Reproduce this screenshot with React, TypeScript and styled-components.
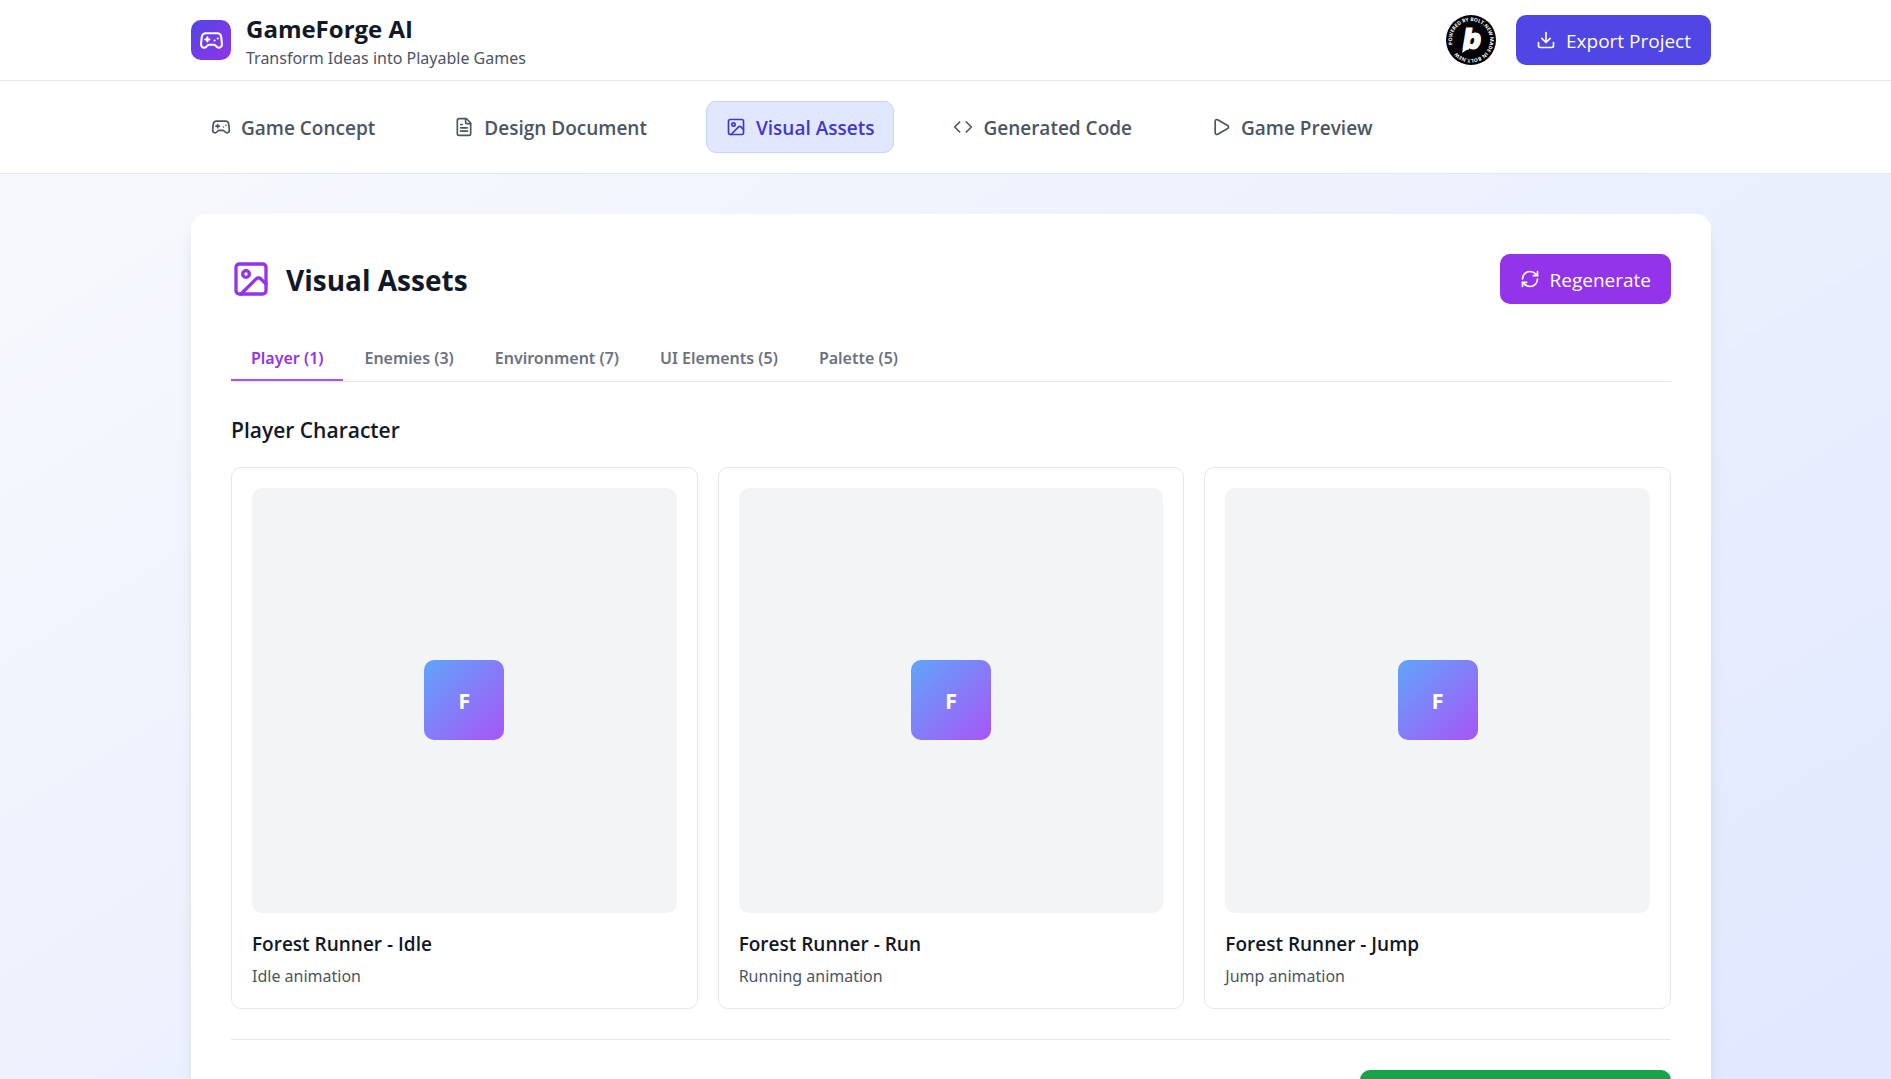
import React, { useState } from "react";
import styled, { createGlobalStyle } from "styled-components";
import { Code, Download, FileText, Gamepad2, Image as ImageIcon, Play, RefreshCw } from "lucide-react";

const GlobalStyle = createGlobalStyle`
  *, *::before, *::after { box-sizing: border-box; }
  body {
    margin: 0;
    font-family: "Open Sans", "Noto Sans", sans-serif;
    color: #111827;
  }
  h1, h2, h3, h4, p { margin: 0; }
  button { font: inherit; cursor: pointer; border: 0; background: none; }
  svg { display: block; flex: none; }
`;

const Viewport = styled.div`
  height: 100vh;
  overflow: hidden;
`;

const Page = styled.div`
  min-height: 100%;
  background: linear-gradient(to bottom right, #f8fafc, #e0e7ff);
`;

const Bar = styled.div`
  padding-left: 11px;
  background: #fff;
  border-bottom: 1px solid #e5e7eb;
`;

const Container = styled.div`
  max-width: 1520px;
  margin: 0 auto;
`;

const HeaderRow = styled(Container)`
  display: flex;
  align-items: center;
  justify-content: space-between;
  height: 80px;
`;

const Brand = styled.div`
  display: flex;
  align-items: center;
  gap: 15px;
`;

const BrandTile = styled.div`
  display: flex;
  align-items: center;
  justify-content: center;
  width: 40px;
  height: 40px;
  border-radius: 10px;
  color: #fff;
  background: linear-gradient(to bottom right, #4f46e5, #9333ea);
`;

const BrandText = styled.div`
  padding-top: 2px;
`;

const BrandName = styled.h1`
  font-size: 24px;
  line-height: 35px;
  font-weight: 700;
`;

const Note = styled.p`
  font-family: "Noto Sans", "Open Sans", sans-serif;
  font-size: 16px;
  line-height: 25px;
  color: #4b5563;
`;

const HeaderActions = styled.div`
  display: flex;
  align-items: center;
  gap: 20px;
`;

const BadgeLink = styled.a`
  display: block;
  width: 50px;
  height: 50px;
`;

const ActionButton = styled.button<{ $color: string; $minWidth?: number }>`
  display: flex;
  align-items: center;
  justify-content: center;
  gap: 10px;
  height: 50px;
  min-width: ${(p) => (p.$minWidth ? `${p.$minWidth}px` : "0")};
  padding: 0 20px;
  border-radius: 10px;
  font-size: 19px;
  line-height: 30px;
  color: #fff;
  background: ${(p) => p.$color};
`;

const ButtonLabel = styled.span`
  padding-top: 2px;
`;

const StepNav = styled.nav`
  display: flex;
  gap: 39px;
  max-width: 1520px;
  margin: 0 auto;
  padding: 20px 0;
`;

const StepButton = styled.button<{ $active: boolean }>`
  display: flex;
  align-items: center;
  gap: 10px;
  height: 52px;
  padding: 0 19px;
  border: 1px solid ${(p) => (p.$active ? "#c7d2fe" : "transparent")};
  border-radius: 10px;
  font-size: 19px;
  line-height: 30px;
  font-weight: 600;
  color: ${(p) => (p.$active ? "#4338ca" : "#4b5563")};
  background: ${(p) => (p.$active ? "#e0e7ff" : "transparent")};
`;

const Main = styled.main`
  padding: 40px 0 40px 11px;
`;

const Panel = styled(Container)`
  padding: 40px;
  border-radius: 15px;
  background: #fff;
  box-shadow: 0 12px 18px -4px rgba(0, 0, 0, 0.1), 0 5px 8px -5px rgba(0, 0, 0, 0.1);
`;

const PanelHead = styled.div`
  display: flex;
  align-items: center;
  justify-content: space-between;
`;

const PanelTitle = styled.div`
  display: flex;
  align-items: center;
  gap: 15px;
  color: #9333ea;
`;

const Heading = styled.h2`
  padding-top: 2px;
  font-size: 28px;
  line-height: 40px;
  font-weight: 700;
  color: #111827;
`;

const TabList = styled.div`
  display: flex;
  gap: 1px;
  margin-top: 30px;
  border-bottom: 1px solid #e5e7eb;
`;

const Tab = styled.button<{ $active: boolean }>`
  padding: 12px 20px 8px;
  border-bottom: 2px solid ${(p) => (p.$active ? "#a855f7" : "transparent")};
  font-family: "Noto Sans", "Open Sans", sans-serif;
  font-size: 16px;
  line-height: 25px;
  font-weight: 600;
  color: ${(p) => (p.$active ? "#9333ea" : "#6b7280")};
`;

const SectionTitle = styled.h3`
  margin: 31px 0 19px;
  font-size: 21px;
  line-height: 35px;
  font-weight: 600;
`;

const AssetGrid = styled.div`
  display: grid;
  grid-template-columns: repeat(3, 1fr);
  gap: 20px;
`;

const AssetCard = styled.article`
  padding: 20px 20px 19px;
  border: 1px solid #e5e7eb;
  border-radius: 10px;
`;

const Preview = styled.div`
  display: flex;
  align-items: center;
  justify-content: center;
  aspect-ratio: 1;
  margin-bottom: 16px;
  border-radius: 10px;
  background: #f3f4f6;
`;

const Sprite = styled.div`
  display: flex;
  align-items: center;
  justify-content: center;
  width: 80px;
  height: 80px;
  border-radius: 10px;
  font-size: 22px;
  font-weight: 700;
  color: #fff;
  background: linear-gradient(to bottom right, #60a5fa, #a855f7);
`;

const AssetName = styled.h4`
  margin-bottom: 5px;
  font-size: 19px;
  line-height: 30px;
  font-weight: 600;
`;

const PanelFoot = styled.div`
  display: flex;
  justify-content: flex-end;
  margin-top: 30px;
  padding-top: 30px;
  border-top: 1px solid #e5e7eb;
`;

const steps = [
  { label: "Game Concept", Icon: Gamepad2 },
  { label: "Design Document", Icon: FileText },
  { label: "Visual Assets", Icon: ImageIcon },
  { label: "Generated Code", Icon: Code },
  { label: "Game Preview", Icon: Play },
];

const tabs = [
  { label: "Player", count: 1 },
  { label: "Enemies", count: 3 },
  { label: "Environment", count: 7 },
  { label: "UI Elements", count: 5 },
  { label: "Palette", count: 5 },
];

const assets = [
  { name: "Forest Runner - Idle", note: "Idle animation" },
  { name: "Forest Runner - Run", note: "Running animation" },
  { name: "Forest Runner - Jump", note: "Jump animation" },
];

function BoltBadge() {
  return (
    <svg width="50" height="50" viewBox="0 0 100 100" aria-hidden="true">
      <circle cx="50" cy="50" r="50" fill="#000" />
      <defs>
        <path id="badge-ring" d="M13.1 59.2A38 38 0 0 1 86.9 40.8A38 38 0 0 1 13.1 59.2" />
      </defs>
      <text fill="#fff" fontFamily="Open Sans, sans-serif" fontSize="10" fontWeight="700">
        <textPath href="#badge-ring">POWERED BY BOLT.NEW MADE IN BOLT.NEW</textPath>
      </text>
      <text x="52" y="68" fill="#fff" stroke="#fff" strokeWidth="2" textAnchor="middle" fontFamily="Inter, sans-serif" fontSize="56" fontWeight="900" fontStyle="italic">b</text>
      <path d="M36 58L32 76L46 67Z" fill="#fff" />
    </svg>
  );
}

export default function App() {
  const [step, setStep] = useState("Visual Assets");
  const [tab, setTab] = useState("Player");

  return (
    <Viewport>
      <GlobalStyle />
      <Page>
        <Bar as="header">
          <HeaderRow>
            <Brand>
              <BrandTile>
                <Gamepad2 size={25} />
              </BrandTile>
              <BrandText>
                <BrandName>GameForge AI</BrandName>
                <Note>Transform Ideas into Playable Games</Note>
              </BrandText>
            </Brand>
            <HeaderActions>
              <BadgeLink href="#bolt" aria-label="Powered by Bolt.new">
                <BoltBadge />
              </BadgeLink>
              <ActionButton type="button" $color="#4f46e5">
                <Download size={20} />
                <ButtonLabel>Export Project</ButtonLabel>
              </ActionButton>
            </HeaderActions>
          </HeaderRow>
        </Bar>
        <Bar>
          <StepNav>
            {steps.map(({ label, Icon }) => (
              <StepButton key={label} type="button" $active={label === step} onClick={() => setStep(label)}>
                <Icon size={20} />
                <ButtonLabel>{label}</ButtonLabel>
              </StepButton>
            ))}
          </StepNav>
        </Bar>
        <Main>
          <Panel>
            <PanelHead>
              <PanelTitle>
                <ImageIcon size={40} />
                <Heading>Visual Assets</Heading>
              </PanelTitle>
              <ActionButton type="button" $color="#9333ea">
                <RefreshCw size={20} />
                <ButtonLabel>Regenerate</ButtonLabel>
              </ActionButton>
            </PanelHead>
            <TabList role="tablist">
              {tabs.map(({ label, count }) => (
                <Tab
                  key={label}
                  type="button"
                  role="tab"
                  aria-selected={label === tab}
                  $active={label === tab}
                  onClick={() => setTab(label)}
                >
                  {`${label} (${count})`}
                </Tab>
              ))}
            </TabList>
            <SectionTitle>Player Character</SectionTitle>
            <AssetGrid>
              {assets.map(({ name, note }) => (
                <AssetCard key={name}>
                  <Preview>
                    <Sprite>{name.charAt(0)}</Sprite>
                  </Preview>
                  <AssetName>{name}</AssetName>
                  <Note>{note}</Note>
                </AssetCard>
              ))}
            </AssetGrid>
            <PanelFoot>
              <ActionButton type="button" $color="#16a34a" $minWidth={311}>
                <ButtonLabel>Generate Game Code</ButtonLabel>
              </ActionButton>
            </PanelFoot>
          </Panel>
        </Main>
      </Page>
    </Viewport>
  );
}
